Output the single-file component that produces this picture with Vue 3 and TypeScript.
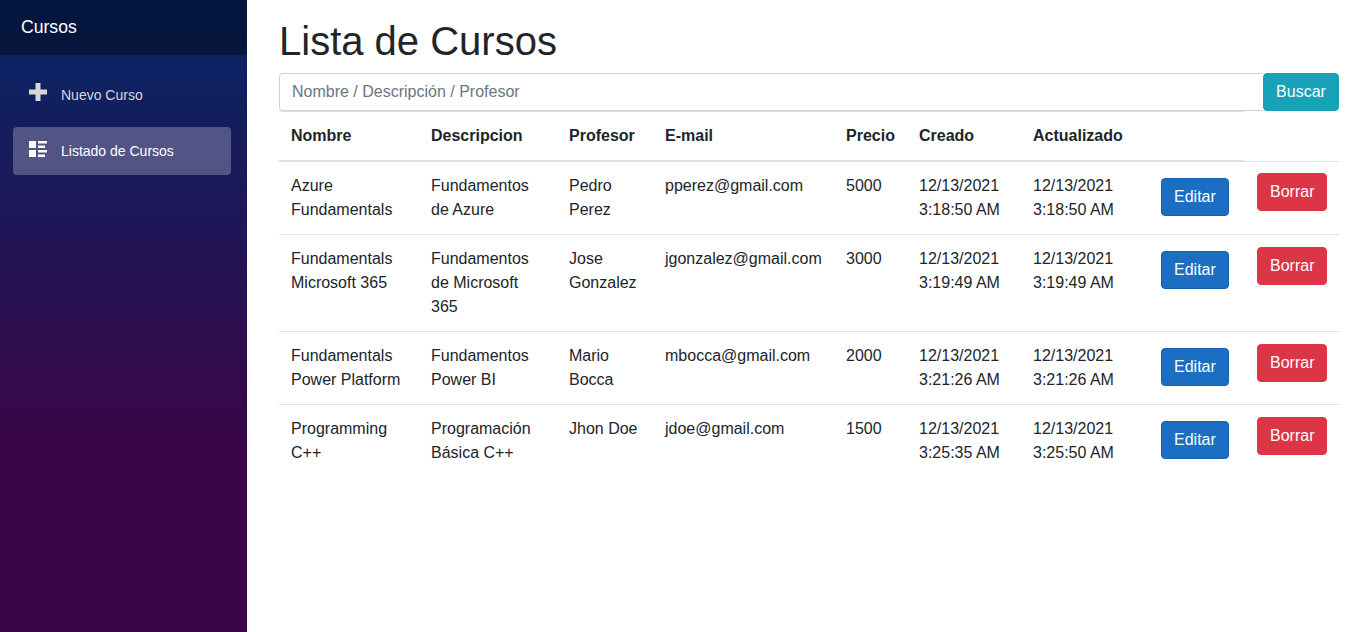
<script setup lang="ts">
interface Course {
  nombre: string
  descripcion: string
  profesor: string
  email: string
  precio: number
  creado: [string, string]
  actualizado: [string, string]
}

const courses: Course[] = [
  { nombre: 'Azure Fundamentals', descripcion: 'Fundamentos de Azure', profesor: 'Pedro Perez', email: 'pperez@gmail.com', precio: 5000, creado: ['12/13/2021', '3:18:50 AM'], actualizado: ['12/13/2021', '3:18:50 AM'] },
  { nombre: 'Fundamentals Microsoft 365', descripcion: 'Fundamentos de Microsoft 365', profesor: 'Jose Gonzalez', email: 'jgonzalez@gmail.com', precio: 3000, creado: ['12/13/2021', '3:19:49 AM'], actualizado: ['12/13/2021', '3:19:49 AM'] },
  { nombre: 'Fundamentals Power Platform', descripcion: 'Fundamentos Power BI', profesor: 'Mario Bocca', email: 'mbocca@gmail.com', precio: 2000, creado: ['12/13/2021', '3:21:26 AM'], actualizado: ['12/13/2021', '3:21:26 AM'] },
  { nombre: 'Programming C++', descripcion: 'Programación Básica C++', profesor: 'Jhon Doe', email: 'jdoe@gmail.com', precio: 1500, creado: ['12/13/2021', '3:25:35 AM'], actualizado: ['12/13/2021', '3:25:50 AM'] }
]
const widths = [140, 138, 96, 181, 73, 114, 128, 96, 94]
</script>

<template>
  <div class="page">
    <aside class="sidebar">
      <div class="brand">Cursos</div>
      <nav class="nav">
        <a class="nav-item">
          <svg class="icon" viewBox="0 0 18 18"><path d="M6.5 0h5v6.5h6.5v5h-6.5v6.5h-5v-6.5h-6.5v-5h6.5z" /></svg>
          <span>Nuevo Curso</span>
        </a>
        <a class="nav-item active">
          <svg class="icon" viewBox="0 0 18 18"><path d="M0 2h7v7h-7zM9 2h9v2.5h-9zM9 6.5h7v2.5h-7zM0 11h7v7h-7zM9 11h9v2.5h-9zM9 15.5h7v2.5h-7z" /></svg>
          <span>Listado de Cursos</span>
        </a>
      </nav>
    </aside>
    <main class="content">
      <h1>Lista de Cursos</h1>
      <div class="search">
        <input type="text" placeholder="Nombre / Descripción / Profesor" />
        <button class="btn buscar" type="button">Buscar</button>
      </div>
      <table>
        <colgroup>
          <col v-for="(w, i) in widths" :key="i" :style="{ width: w + 'px' }" />
        </colgroup>
        <thead>
          <tr>
            <th>Nombre</th>
            <th>Descripcion</th>
            <th>Profesor</th>
            <th>E-mail</th>
            <th>Precio</th>
            <th>Creado</th>
            <th>Actualizado</th>
            <th></th>
          </tr>
        </thead>
        <tbody>
          <tr v-for="c in courses" :key="c.email">
            <td>{{ c.nombre }}</td>
            <td>{{ c.descripcion }}</td>
            <td>{{ c.profesor }}</td>
            <td>{{ c.email }}</td>
            <td>{{ c.precio }}</td>
            <td>{{ c.creado[0] }}<br />{{ c.creado[1] }}</td>
            <td>{{ c.actualizado[0] }}<br />{{ c.actualizado[1] }}</td>
            <td><button class="btn editar" type="button">Editar</button></td>
            <td><button class="btn borrar" type="button">Borrar</button></td>
          </tr>
        </tbody>
      </table>
    </main>
  </div>
</template>

<style>
html, body { margin: 0; padding: 0; background: #fff; }
</style>

<style scoped>
.page {
  display: flex;
  min-height: 632px;
  font-family: "Liberation Sans", Arial, sans-serif;
  font-size: 16px;
  line-height: 24px;
  color: #212529;
}
.sidebar {
  width: 247px;
  flex: none;
  background-image: linear-gradient(180deg, #052767 0%, #3a0647 70%);
}
.brand {
  height: 55px;
  box-sizing: border-box;
  padding: 0 0 2px 21px;
  display: flex;
  align-items: center;
  background: rgba(0, 0, 0, 0.4);
  color: #fff;
  font-size: 17.6px;
}
.nav {
  padding: 16px 16px 0 13px;
  display: flex;
  flex-direction: column;
  gap: 8px;
}
.nav-item {
  height: 48px;
  display: flex;
  align-items: center;
  padding-left: 16px;
  border-radius: 4px;
  color: #d7d7d7;
  font-size: 14px;
}
.nav-item.active {
  background: rgba(255, 255, 255, 0.25);
  color: #fff;
}
.icon {
  width: 18px;
  height: 18px;
  margin: 0 14px 6px 0;
  fill: currentColor;
}
.content {
  flex: 1;
  min-width: 0;
  padding: 17px 19px 0 32px;
}
h1 {
  margin: 0 0 8px;
  font-size: 40px;
  line-height: 48px;
  font-weight: 500;
}
.search {
  display: flex;
}
.search input {
  flex: 1;
  min-width: 0;
  height: 38px;
  box-sizing: border-box;
  padding: 6px 12px;
  border: 1px solid #ced4da;
  border-right: 0;
  border-radius: 4px 0 0 4px;
  font: inherit;
  color: #495057;
  outline: none;
}
.search input::placeholder {
  color: #6c757d;
  opacity: 1;
}
.btn {
  height: 38px;
  box-sizing: border-box;
  padding: 6px 12px;
  border: 1px solid transparent;
  border-radius: 4px;
  font: inherit;
  color: #fff;
  cursor: pointer;
}
.buscar {
  width: 76px;
  flex: none;
  background: #17a2b8;
  border-color: #17a2b8;
}
.editar {
  background: #1b6ec2;
  border-color: #1861ac;
  margin-top: 4px;
  display: block;
}
.borrar {
  background: #dc3545;
  border-color: #dc3545;
  display: block;
}
tbody tr:first-child .borrar {
  margin-top: -1px;
}
table {
  width: 1060px;
  table-layout: fixed;
  border-collapse: collapse;
}
th, td {
  padding: 12px;
  text-align: left;
  vertical-align: top;
  border-top: 1px solid #dee2e6;
}
th {
  font-weight: 700;
  border-bottom: 2px solid #dee2e6;
}
</style>
